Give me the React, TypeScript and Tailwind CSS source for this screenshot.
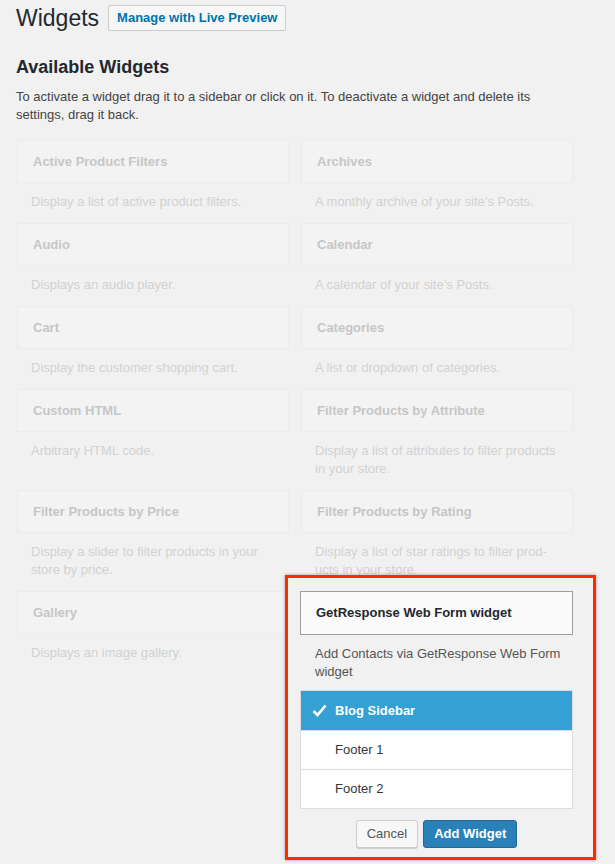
import React from 'react'

type Widget = { title: string; desc: string }

const widgets: Widget[] = [
  { title: 'Active Product Filters', desc: 'Display a list of active product filters.' },
  { title: 'Archives', desc: 'A monthly archive of your site’s Posts.' },
  { title: 'Audio', desc: 'Displays an audio player.' },
  { title: 'Calendar', desc: 'A calendar of your site’s Posts.' },
  { title: 'Cart', desc: 'Display the customer shopping cart.' },
  { title: 'Categories', desc: 'A list or dropdown of categories.' },
  { title: 'Custom HTML', desc: 'Arbitrary HTML code.' },
  { title: 'Filter Products by Attribute', desc: 'Display a list of attributes to filter products in your store.' },
  { title: 'Filter Products by Price', desc: 'Display a slider to filter products in your store by price.' },
  { title: 'Filter Products by Rating', desc: 'Display a list of star ratings to filter prod-\u200Bucts in your store.' },
  { title: 'Gallery', desc: 'Displays an image gallery.' },
]

const sidebars = ['Blog Sidebar', 'Footer 1', 'Footer 2']

function WidgetItem({ widget }: { widget: Widget }) {
  return (
    <div>
      <div className="h-[43px] flex items-center px-[15px] bg-[#f3f3f3] border border-[#ececec] text-[13px] font-bold text-[#c6c6c6]">
        {widget.title}
      </div>
      <p className="pt-[10px] pb-3 px-[14px] text-[13px] leading-[18px] text-[#d2d2d2]">{widget.desc}</p>
    </div>
  )
}

function Chooser() {
  return (
    <div className="relative -ml-px">
      {/* red annotation frame */}
      <div className="absolute -top-4 -left-[15px] -right-[23px] -bottom-3 border-[3px] border-[#ff2a00] bg-[#f1f1f1] shadow-[0_0_3px_rgba(0,0,0,0.35)]" />
      <div className="relative">
        <div className="h-[44px] flex items-center px-[15px] bg-[#fafafa] border border-[#9e9e9e] text-[13px] font-bold text-[#23282d]">
          GetResponse Web Form widget
        </div>
        <p className="pt-[10px] pl-[15px] pr-2 text-[13px] leading-[18px] text-[#555]">
          Add Contacts via GetResponse Web Form widget
        </p>
        <ul className="mt-[9px] border border-[#dcdcdc] bg-white">
          {sidebars.map((s, i) => (
            <li
              key={s}
              className={
                i === 0
                  ? 'h-[39px] flex items-center pl-[11px] bg-[#35a0d3] text-white font-bold text-[13px]'
                  : 'h-[39px] flex items-center pl-[34px] border-t border-[#dcdcdc] text-[#32373c] text-[13px]'
              }
            >
              {i === 0 && (
                <svg width="15" height="13" viewBox="0 0 15 13" className="mr-[8px]">
                  <polyline points="1.5,7 5.5,11 13.5,1.5" fill="none" stroke="white" strokeWidth="2.6" />
                </svg>
              )}
              {s}
            </li>
          ))}
        </ul>
        <div className="mt-[11px] flex justify-center gap-[5px]">
          <button className="h-[28px] px-[10px] rounded-[3px] border border-[#cccccc] bg-[#f7f7f7] text-[13px] text-[#555] shadow-[0_1px_0_#ccc]">
            Cancel
          </button>
          <button className="h-[28px] px-[10px] rounded-[3px] border border-[#1f6a99] bg-[#2a81b8] text-[13px] font-bold text-white">
            Add Widget
          </button>
        </div>
      </div>
    </div>
  )
}

export default function App() {
  return (
    <div className="min-h-[864px] bg-[#f1f1f1] px-4 pt-[5px] font-['Liberation_Sans',Arial,sans-serif] overflow-hidden">
      <div className="flex items-center gap-[9px]">
        <h1 className="text-[23px] leading-[26px] text-[#23282d]">Widgets</h1>
        <button className="h-[26px] px-2 border border-[#cccccc] bg-[#f7f7f7] rounded-[2px] text-[13px] font-bold text-[#0073aa]">
          Manage with Live Preview
        </button>
      </div>

      <h2 className="mt-[24px] text-[18px] leading-[24px] font-bold text-[#23282d]">Available Widgets</h2>
      <p className="mt-[9px] pr-[40px] text-[13px] leading-[18px] text-[#444]">
        To activate a widget drag it to a sidebar or click on it. To deactivate a widget and delete its settings, drag it back.
      </p>

      <div className="mt-4 grid grid-cols-[272px_272px] gap-x-[12px] pl-px">
        {widgets.map((w) => (
          <WidgetItem key={w.title} widget={w} />
        ))}
        <Chooser />
      </div>
    </div>
  )
}
